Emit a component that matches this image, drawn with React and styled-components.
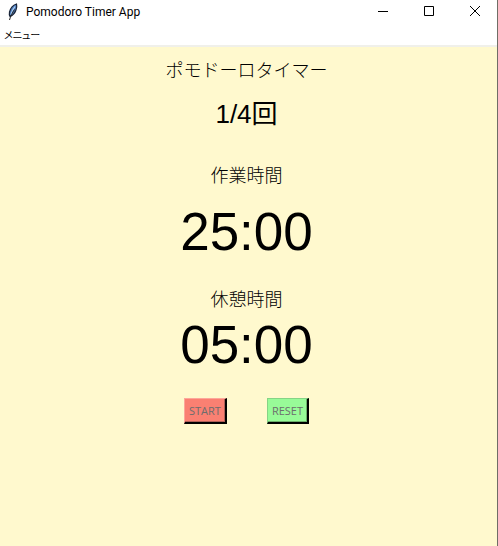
import React, { useEffect, useState } from "react";
import styled, { createGlobalStyle } from "styled-components";

const WORK_SECONDS = 25 * 60;
const BREAK_SECONDS = 5 * 60;
const TOTAL_ROUNDS = 4;

const GlobalStyle = createGlobalStyle`
  body {
    margin: 0;
    background-color: #fff9ce;
  }
`;

const Window = styled.div`
  box-sizing: border-box;
  display: flex;
  flex-direction: column;
  min-height: 100vh;
  border-right: 1px solid #6f6e66;
  background-color: #fff9ce;
  color: #000;
  font-family: "Open Sans", "Noto Sans CJK JP", sans-serif;
`;

const TitleBar = styled.header`
  display: flex;
  align-items: center;
  height: 24px;
  padding-left: 6px;
  background-color: #fff;
`;

const AppTitle = styled.h1`
  flex: 1;
  margin: 0 0 0 6px;
  font-family: Roboto, sans-serif;
  font-size: 12px;
  font-weight: 400;
  line-height: 24px;
`;

const WindowButton = styled.button`
  display: flex;
  align-items: center;
  justify-content: center;
  width: 46px;
  height: 24px;
  padding: 0 0 2px 2px;
  border: 0;
  background: none;
`;

const MenuBar = styled.nav`
  display: flex;
  height: 21px;
  border-bottom: 2px solid #f0f0ea;
  background-color: #fff;
`;

const MenuButton = styled.button`
  padding: 0 4px;
  border: 0;
  background: none;
  color: #000;
  font-family: "Noto Sans CJK JP", sans-serif;
  font-feature-settings: "palt";
  font-size: 10px;
  line-height: 20px;
`;

const Content = styled.main`
  display: flex;
  flex-direction: column;
  align-items: center;
  padding: 8px 4px 0 0;
`;

const Label = styled.h2`
  margin: 0;
  font-family: "Noto Sans CJK JP", sans-serif;
  font-size: 18px;
  font-weight: 300;
  line-height: 28px;
`;

const Rounds = styled.p`
  margin: 15px 0 30px;
  font-family: "Liberation Sans", "Noto Sans CJK JP", sans-serif;
  font-size: 26px;
  line-height: 32px;
`;

const Time = styled.time`
  margin: ${({ $above }) => $above}px 0 22px;
  font-family: "Liberation Sans", sans-serif;
  font-size: 53px;
  line-height: 60px;
`;

const Buttons = styled.div`
  display: flex;
  gap: 40px;
  margin-top: 1px;
`;

const TimerButton = styled.button`
  height: 26px;
  padding: 0 4px;
  border-style: solid;
  border-width: 1px 2px 2px 1px;
  border-color: ${({ $light }) => $light} #000 #000 ${({ $light }) => $light};
  background-color: ${({ $color }) => $color};
  box-shadow: inset -1px -1px 0 ${({ $shade }) => $shade};
  color: #6d6d6d;
  font-family: "Open Sans", sans-serif;
  font-size: 11px;
  line-height: 20px;
`;

function FeatherIcon() {
  return (
    <svg width="14" height="18" viewBox="0 0 14 18" aria-hidden="true">
      <path
        d="M10.500 1C7.500 2 4.500 5 3.500 9c-.4 2-.2 3.500.5 4.500 2-.8 4.700-3 5.800-6C10.800 5.500 11 3 10.500 1z"
        fill="#4f7fc0"
        stroke="#182338"
        strokeWidth="1.2"
      />
      <path d="M9 3.500C7 6 5.500 9 5 11.500" fill="none" stroke="#b4d4f4" strokeWidth="1.2" />
      <path d="M8.500 6.500C6.500 9.500 4.500 13 3.500 17" fill="none" stroke="#222" strokeWidth="1" />
    </svg>
  );
}

function WindowIcon({ path }) {
  return (
    <svg width="12" height="12" viewBox="0 0 12 12" aria-hidden="true">
      <path d={path} fill="none" stroke="#000" />
    </svg>
  );
}

function formatTime(seconds) {
  const minutes = String(Math.floor(seconds / 60)).padStart(2, "0");
  return `${minutes}:${String(seconds % 60).padStart(2, "0")}`;
}

export default function App() {
  const [running, setRunning] = useState(false);
  const [elapsed, setElapsed] = useState(0);

  useEffect(() => {
    if (!running) return undefined;
    const id = setInterval(() => setElapsed((value) => value + 1), 1000);
    return () => clearInterval(id);
  }, [running]);

  const cycle = WORK_SECONDS + BREAK_SECONDS;
  const round = Math.min(Math.floor(elapsed / cycle) + 1, TOTAL_ROUNDS);
  const inCycle = elapsed % cycle;
  const work = Math.max(WORK_SECONDS - inCycle, 0);
  const rest = BREAK_SECONDS - Math.max(inCycle - WORK_SECONDS, 0);

  const reset = () => {
    setRunning(false);
    setElapsed(0);
  };

  return (
    <Window>
      <GlobalStyle />
      <TitleBar>
        <FeatherIcon />
        <AppTitle>Pomodoro Timer App</AppTitle>
        <WindowButton aria-label="Minimize">
          <WindowIcon path="M1 6.500h10" />
        </WindowButton>
        <WindowButton aria-label="Maximize">
          <WindowIcon path="M1.500 1.500h9v9h-9z" />
        </WindowButton>
        <WindowButton aria-label="Close">
          <WindowIcon path="M1 1l10 10M11 1L1 11" />
        </WindowButton>
      </TitleBar>
      <MenuBar>
        <MenuButton>メニュー</MenuButton>
      </MenuBar>
      <Content>
        <Label>ポモドーロタイマー</Label>
        <Rounds>
          {round}/{TOTAL_ROUNDS}回
        </Rounds>
        <Label>作業時間</Label>
        <Time $above={14}>{formatTime(work)}</Time>
        <Label>休憩時間</Label>
        <Time $above={3}>{formatTime(rest)}</Time>
        <Buttons>
          <TimerButton
            $color="#fa8072"
            $light="#fda79a"
            $shade="#b06058"
            onClick={() => setRunning(true)}
          >
            START
          </TimerButton>
          <TimerButton $color="#98fb98" $light="#86d486" $shade="#6cb06c" onClick={reset}>
            RESET
          </TimerButton>
        </Buttons>
      </Content>
    </Window>
  );
}
